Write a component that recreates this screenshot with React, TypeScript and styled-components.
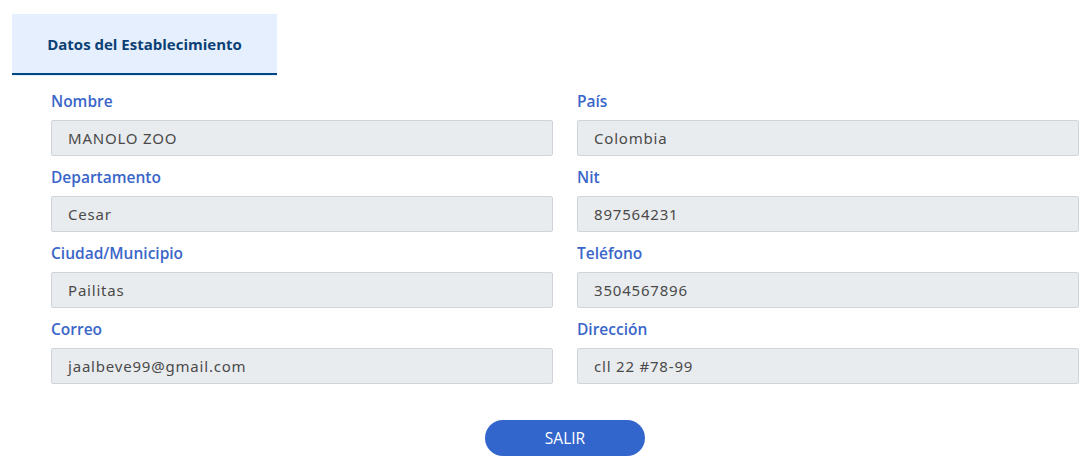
import React from "react";
import styled, { createGlobalStyle } from "styled-components";

const GlobalStyle = createGlobalStyle`
	body {
		margin: 0;
		background: #ffffff;
		font-family: "Open Sans", "Noto Sans", sans-serif;
	}
`;

const Page = styled.div`
	width: 1088px;
	height: 465px;
	padding-top: 14px;
	box-sizing: border-box;
`;

const TabBar = styled.div`
	display: flex;
	padding-left: 12px;
`;

const Tab = styled.div`
	width: 265px;
	height: 61px;
	box-sizing: border-box;
	display: flex;
	align-items: center;
	justify-content: center;
	background: #e6effd;
	border-bottom: 2px solid #004884;
	box-shadow: 0 1px 0 #e6ecf3;
	color: #0b3f75;
	font-size: 15px;
	font-weight: 700;
`;

const Body = styled.div`
	padding: 15px 9px 0 51px;
`;

const Form = styled.div`
	display: grid;
	grid-template-columns: 502px 502px;
	column-gap: 24px;
`;

const Field = styled.div`
	display: flex;
	flex-direction: column;
	margin-bottom: 10px;
`;

const Label = styled.label`
	height: 22px;
	line-height: 22px;
	margin-bottom: 8px;
	color: #3a66c9;
	font-size: 15.5px;
	font-weight: 600;
`;

const Input = styled.div`
	height: 36px;
	box-sizing: border-box;
	display: flex;
	align-items: center;
	padding-left: 16px;
	background: #e9ecef;
	border: 1px solid #ced4da;
	border-radius: 2px;
	color: #4a4a4a;
	font-family: "Noto Sans", "Open Sans", sans-serif;
	font-size: 15px;
	letter-spacing: 0.8px;
`;

const Actions = styled.div`
	display: flex;
	justify-content: center;
	width: 1028px;
	padding-top: 26px;
`;

const Button = styled.button`
	width: 160px;
	height: 36px;
	border: none;
	border-radius: 18px;
	background: #3366cc;
	color: #ffffff;
	font-family: "Open Sans", sans-serif;
	font-size: 15.5px;
	cursor: pointer;
`;

const fields: [string, string][] = [
	["Nombre", "MANOLO ZOO"],
	["País", "Colombia"],
	["Departamento", "Cesar"],
	["Nit", "897564231"],
	["Ciudad/Municipio", "Pailitas"],
	["Teléfono", "3504567896"],
	["Correo", "jaalbeve99@gmail.com"],
	["Dirección", "cll 22 #78-99"],
];

const App = () => (
	<Page>
		<GlobalStyle />
		<TabBar>
			<Tab>Datos del Establecimiento</Tab>
		</TabBar>
		<Body>
			<Form>
				{fields.map(([label, value]) => (
					<Field key={label}>
						<Label>{label}</Label>
						<Input>{value}</Input>
					</Field>
				))}
			</Form>
			<Actions>
				<Button>SALIR</Button>
			</Actions>
		</Body>
	</Page>
);

export default App;
